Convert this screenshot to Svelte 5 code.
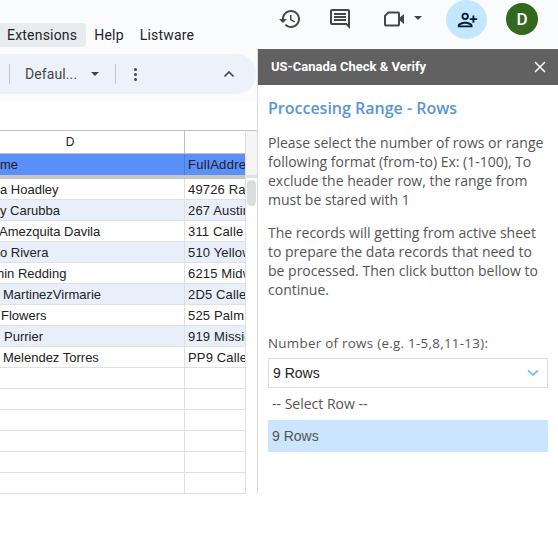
<script lang="ts">
  // indent: сдвиг текста, потому что колонка D обрезана левым краем окна
  const rows = [
    { name: "a Hoadley", indent: 0, addr: "49726 Ranch Rd" },
    { name: "y Carubba", indent: 0, addr: "267 Austin St" },
    { name: "Amezquita Davila", indent: -1, addr: "311 Calle Sol" },
    { name: "o Rivera", indent: 0, addr: "510 Yellow Rd" },
    { name: "hin Redding", indent: -3, addr: "6215 Midway Dr" },
    { name: "MartinezVirmarie", indent: 3, addr: "2D5 Calle Luna" },
    { name: "Flowers", indent: 1, addr: "525 Palm Ave" },
    { name: "Purrier", indent: 4, addr: "919 Mission St" },
    { name: "Melendez Torres", indent: 3, addr: "PP9 Calle Mar" },
    { name: "", indent: 0, addr: "" },
    { name: "", indent: 0, addr: "" },
    { name: "", indent: 0, addr: "" },
    { name: "", indent: 0, addr: "" },
    { name: "", indent: 0, addr: "" },
    { name: "", indent: 0, addr: "" }
  ];
</script>

<div class="page">
  <header class="topbar">
    <nav class="menu">
      <span class="item active">Extensions</span>
      <span class="item">Help</span>
      <span class="item">Listware</span>
    </nav>
    <div class="actions">
      <svg class="ic history" viewBox="0 0 24 24"><path d="M13 3c-4.97 0-9 4.03-9 9H1l3.89 3.89.07.14L9 12H6c0-3.87 3.13-7 7-7s7 3.13 7 7-3.13 7-7 7c-1.93 0-3.68-.79-4.94-2.06l-1.42 1.42C8.27 19.99 10.51 21 13 21c4.97 0 9-4.03 9-9s-4.03-9-9-9zm-1 5v5l4.28 2.54.72-1.21-3.5-2.08V8H12z"/></svg>
      <svg class="ic comment" viewBox="0 0 24 24"><path d="M20 4v13.17L18.83 16H4V4h16m0-2H4c-1.1 0-2 .9-2 2v12c0 1.1.9 2 2 2h14l4 4V4c0-1.1-.9-2-2-2zm-2 10H6v2h12v-2zm0-3H6v2h12V9zm0-3H6v2h12V6z"/></svg>
      <div class="meet">
        <svg class="ic" viewBox="0 0 24 24"><path d="M6 4.500h10a2 2 0 0 1 2 2v3.700L22 7v10l-4-3.200v3.700a2 2 0 0 1-2 2H4a2 2 0 0 1-2-2v-9zm.8 2L4 9.300v8.200h12v-11H6.800z"/></svg>
        <span class="caret"></span>
      </div>
      <div class="share">
        <svg viewBox="0 0 24 24"><path d="M10 12a4 4 0 1 0 0-8 4 4 0 0 0 0 8zm0-6a2 2 0 1 1 0 4 2 2 0 0 1 0-4zm0 8c-2.700 0-8 1.300-8 4v2h16v-2c0-2.700-5.300-4-8-4zm-6 4c.2-.7 3.300-2 6-2s5.800 1.300 6 2H4zm16-8V7h-2v3h-3v2h3v3h2v-3h3v-2h-3z"/></svg>
      </div>
      <div class="avatar">D</div>
    </div>
  </header>

  <div class="main">
    <section class="sheet">
      <div class="toolbar-wrap">
        <div class="toolbar">
          <span class="sep"></span>
          <span class="font">Defaul...</span>
          <span class="caret small"></span>
          <span class="sep second"></span>
          <span class="dots"><i></i><i></i><i></i></span>
          <svg class="collapse" viewBox="0 0 12 8"><path d="M1.500 6.500 6 2l4.500 4.500" /></svg>
        </div>
      </div>

      <div class="grid-area">
        <div class="grid">
          <div class="row head-row">
            <div class="cell d">D</div>
            <div class="cell e"></div>
          </div>
          <div class="row title-row">
            <div class="cell d"><span>me</span></div>
            <div class="cell e"><span>FullAddress</span></div>
          </div>
          {#each rows as r, i}
            <div class="row data" class:band={i % 2 === 1 && i < 9}>
              <div class="cell d"><span style="margin-left: {r.indent}px">{r.name}</span></div>
              <div class="cell e"><span>{r.addr}</span></div>
            </div>
          {/each}
        </div>
        <div class="scroll"><div class="frozen"></div><div class="thumb"></div></div>
      </div>
    </section>

    <aside class="panel">
      <div class="panel-head">
        <span>US-Canada Check &amp; Verify</span>
        <svg viewBox="0 0 12 12"><path d="M1 1l10 10M11 1 1 11" /></svg>
      </div>
      <div class="panel-body">
        <h2>Proccesing Range - Rows</h2>
        <p>Please select the number of rows or range following format (from-to) Ex: (1-100), To exclude the header row, the range from must be stared with 1</p>
        <p>The records will getting from active sheet to prepare the data records that need to be processed. Then click button bellow to continue.</p>
        <label for="rows">Number of rows (e.g. 1-5,8,11-13):</label>
        <div class="select" id="rows">
          <span>9 Rows</span>
          <svg viewBox="0 0 12 8"><path d="M1 1.500 6 6l5-4.500" /></svg>
        </div>
        <div class="option">-- Select Row --</div>
        <div class="option picked">9 Rows</div>
      </div>
    </aside>
  </div>
</div>

<style>
  :global(body) {
    margin: 0;
    background: #fff;
  }
  .page {
    width: 558px;
    height: 541px;
    overflow: hidden;
    font-family: Roboto, "Liberation Sans", sans-serif;
    color: #202124;
  }
  .topbar {
    height: 49px;
    background: #f9fbfd;
    display: flex;
    justify-content: space-between;
    box-sizing: border-box;
  }
  .menu {
    display: flex;
    align-items: flex-start;
    padding-top: 23px;
    font-size: 14px;
  }
  .item {
    height: 24px;
    line-height: 24px;
    padding: 0 8px;
    letter-spacing: 0.2px;
    color: #1f2328;
  }
  .item.active {
    background: #e8ecef;
    border-radius: 0 4px 4px 0;
    padding: 0 9px 0 7px;
  }
  .actions {
    display: flex;
    align-items: flex-start;
    padding-right: 20px;
  }
  .ic {
    width: 24px;
    height: 24px;
    fill: #444746;
    display: block;
  }
  .history {
    margin-top: 7px;
  }
  .comment {
    margin: 7px 0 0 26px;
  }
  .meet {
    display: flex;
    align-items: center;
    margin: 7px 0 0 30px;
    gap: 8px;
  }
  .caret {
    display: block;
    width: 0;
    height: 0;
    border-left: 4px solid transparent;
    border-right: 4px solid transparent;
    border-top: 4px solid #444746;
    margin-bottom: 3px;
  }
  .share {
    width: 41px;
    height: 39px;
    margin-left: 24px;
    border-radius: 50%;
    background: #c2e7ff;
    display: flex;
    align-items: center;
    justify-content: center;
  }
  .share svg {
    width: 22px;
    height: 22px;
    fill: #001d35;
  }
  .avatar {
    width: 32px;
    height: 32px;
    margin: 3px 0 0 19px;
    border-radius: 50%;
    background: #33691e;
    color: #fff;
    font-size: 17px;
    font-weight: 500;
    line-height: 32px;
    text-align: center;
  }
  .main {
    display: flex;
    height: 492px;
  }
  .sheet {
    width: 257px;
    flex: none;
    border-right: 1px solid #dadce0;
    height: 445px;
    overflow: hidden;
  }
  .toolbar-wrap {
    height: 52px;
    background: #f9fbfd;
    padding-top: 5px;
    box-sizing: border-box;
  }
  .toolbar {
    width: 256px;
    height: 40px;
    background: #edf2fa;
    border-radius: 0 20px 20px 0;
    display: flex;
    align-items: center;
    font-size: 14px;
    color: #444746;
  }
  .sep {
    width: 1px;
    height: 20px;
    background: #c7c7c7;
    margin-left: 9px;
  }
  .sep.second {
    margin-left: 16px;
  }
  .font {
    margin-left: 15px;
    letter-spacing: 0.1px;
  }
  .caret.small {
    margin: 0 0 0 14px;
  }
  .dots {
    display: flex;
    flex-direction: column;
    gap: 2px;
    margin-left: 18px;
  }
  .dots i {
    display: block;
    width: 3px;
    height: 3px;
    border-radius: 50%;
    background: #444746;
  }
  .collapse {
    width: 12px;
    height: 8px;
    margin-left: 86px;
    fill: none;
    stroke: #444746;
    stroke-width: 1.600;
  }
  .grid-area {
    display: flex;
    margin-top: 29px;
    height: 364px;
  }
  .grid {
    width: 245px;
    flex: none;
    overflow: hidden;
    border-right: 1px solid #e0e0e0;
  }
  .row {
    display: flex;
    height: 21px;
    box-sizing: border-box;
    border-bottom: 1px solid #e0e0e0;
    font-family: "Liberation Sans", Arial, sans-serif;
    font-size: 13px;
    line-height: 22px;
    color: #222;
  }
  .cell {
    box-sizing: border-box;
    overflow: hidden;
    white-space: nowrap;
    flex: none;
  }
  .cell.d {
    width: 185px;
    border-right: 1px solid #e0e0e0;
  }
  .cell.e {
    width: 60px;
    padding-left: 3px;
    letter-spacing: 0.15px;
  }
  .head-row {
    height: 24px;
    border-top: 1px solid #c0c0c0;
    border-bottom: 1px solid #c0c0c0;
    background: #fff;
    font-size: 12px;
    line-height: 22px;
  }
  .head-row .d {
    text-align: center;
    border-right-color: #c0c0c0;
    padding-right: 44px;
  }
  .title-row {
    height: 25px;
    background: #5b8ff9;
    border-bottom: 4px solid #c4c7c5;
  }
  .title-row .e {
    letter-spacing: 0.3px;
  }
  .title-row .d {
    border-right-color: #4a7de0;
  }
  .data.band {
    background: #e8effb;
  }
  .scroll {
    width: 11px;
    flex: none;
    position: relative;
  }
  .frozen {
    height: 48px;
    box-sizing: border-box;
    background: #f5f5f5;
    border-top: 1px solid #c0c0c0;
    border-bottom: 3px solid #e0e0e0;
  }
  .thumb {
    position: absolute;
    top: 50px;
    left: 1px;
    width: 9px;
    height: 26px;
    background: #dadce0;
    border-radius: 5px;
  }
  .panel {
    flex: 1;
    min-width: 0;
  }
  .panel-head {
    height: 36px;
    background: #616161;
    color: #fff;
    display: flex;
    align-items: center;
    justify-content: space-between;
    padding: 0 12px 0 13px;
    font-size: 13px;
    font-weight: 700;
  }
  .panel-head span {
    margin-top: -1px;
  }
  .panel-head svg {
    width: 12px;
    height: 12px;
    fill: none;
    stroke: #fff;
    stroke-width: 1.500;
  }
  .panel-body {
    padding: 11px 10px 0;
    font-family: "Open Sans", sans-serif;
    font-size: 14px;
    line-height: 19px;
    color: #555;
  }
  h2 {
    margin: 0 0 13px;
    font-size: 16px;
    line-height: 24px;
    font-weight: 600;
    color: #5b95d6;
  }
  p {
    margin: 0 0 14px;
  }
  label {
    display: block;
    margin-top: 35px;
    margin-bottom: 5px;
    font-size: 13.33px;
    letter-spacing: 0.3px;
  }
  .select {
    height: 30px;
    box-sizing: border-box;
    border: 1px solid #ddd;
    display: flex;
    align-items: center;
    justify-content: space-between;
    padding: 0 8px 0 4px;
    font-family: "Liberation Sans", Arial, sans-serif;
    font-size: 14px;
    color: #222;
  }
  .select svg {
    width: 12px;
    height: 8px;
    fill: none;
    stroke: #7cc0f5;
    stroke-width: 2;
  }
  .option {
    height: 32px;
    line-height: 32px;
    padding: 0 4px;
    font-size: 14px;
  }
  .option.picked {
    background: #cce5ff;
    font-family: "Liberation Sans", Arial, sans-serif;
  }
</style>
